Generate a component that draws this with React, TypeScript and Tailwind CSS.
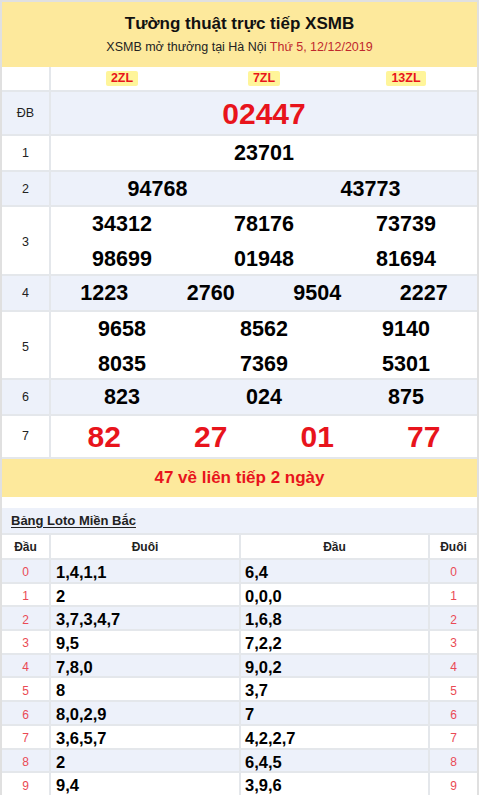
import React from "react";

const font = { fontFamily: '"Liberation Sans", Arial, sans-serif' };

interface PrizeRowProps {
  label: string;
  lines: string[][];
  cols: number;
  height: string;
  blue?: boolean;
  big?: boolean;
}

const gridCols: Record<number, string> = {
  1: "grid-cols-1",
  2: "grid-cols-2",
  3: "grid-cols-3",
  4: "grid-cols-4",
};

const PrizeRow = ({ label, lines, cols, height, blue, big }: PrizeRowProps) => {
  return (
    <div
      className={`grid grid-cols-[49px_1fr] border-t-2 border-[#e4e7eb] ${height} ${
        blue ? "bg-[#edf1fa]" : "bg-white"
      }`}
    >
      <div className="flex items-center justify-center border-r-2 border-[#e4e7eb] text-[12.5px] text-[#222]">
        {label}
      </div>
      <div className="flex flex-col justify-center">
        {lines.map((line, i) => (
          <div key={i} className={`grid ${gridCols[cols]} leading-[35px]`}>
            {line.map((n, j) => (
              <div
                key={j}
                className={`text-center font-bold ${
                  big ? "text-[30px] text-[#e8141c]" : "text-[21.5px] text-black"
                }`}
              >
                {n}
              </div>
            ))}
          </div>
        ))}
      </div>
    </div>
  );
};

const loto = [
  ["1,4,1,1", "6,4"],
  ["2", "0,0,0"],
  ["3,7,3,4,7", "1,6,8"],
  ["9,5", "7,2,2"],
  ["7,8,0", "9,0,2"],
  ["8", "3,7"],
  ["8,0,2,9", "7"],
  ["3,6,5,7", "4,2,2,7"],
  ["2", "6,4,5"],
  ["9,4", "3,9,6"],
];

export default function App() {
  return (
    <div className="w-[480px] h-[795px] overflow-hidden bg-white" style={font}>
      <div className="w-[479px] border-2 border-b-0 border-[#e0e0e0]">
        {/* Header */}
        <div className="h-[65px] bg-[#fde99c] flex flex-col items-center justify-center pt-[1px]">
          <div className="text-[17px] font-bold text-[#111] leading-[22px]">
            Tường thuật trực tiếp XSMB
          </div>
          <div className="text-[12.5px] text-[#222] leading-[20px] mt-[2px]">
            XSMB mở thưởng tại Hà Nội{" "}
            <span className="text-[#c0282d]">Thứ 5, 12/12/2019</span>
          </div>
        </div>

        {/* Badges row */}
        <div className="grid grid-cols-[49px_1fr] h-[23px] bg-white">
          <div className="border-r-2 border-[#e4e7eb]" />
          <div className="grid grid-cols-3 items-center">
            {["2ZL", "7ZL", "13ZL"].map((z) => (
              <div key={z} className="flex justify-center">
                <span className="bg-[#fff59a] text-[#e8141c] font-bold text-[12.5px] leading-[15px] px-[5px] rounded-[2px]">
                  {z}
                </span>
              </div>
            ))}
          </div>
        </div>

        <PrizeRow label="ĐB" lines={[["02447"]]} cols={1} height="h-[44px]" blue big />
        <PrizeRow label="1" lines={[["23701"]]} cols={1} height="h-[36px]" />
        <PrizeRow label="2" lines={[["94768", "43773"]]} cols={2} height="h-[35px]" blue />
        <PrizeRow
          label="3"
          lines={[
            ["34312", "78176", "73739"],
            ["98699", "01948", "81694"],
          ]}
          cols={3}
          height="h-[69px]"
        />
        <PrizeRow
          label="4"
          lines={[["1223", "2760", "9504", "2227"]]}
          cols={4}
          height="h-[36px]"
          blue
        />
        <PrizeRow
          label="5"
          lines={[
            ["9658", "8562", "9140"],
            ["8035", "7369", "5301"],
          ]}
          cols={3}
          height="h-[68px]"
        />
        <PrizeRow label="6" lines={[["823", "024", "875"]]} cols={3} height="h-[36px]" blue />
        <PrizeRow
          label="7"
          lines={[["82", "27", "01", "77"]]}
          cols={4}
          height="h-[43px]"
          big
        />

        {/* Yellow band */}
        <div className="h-[40px] bg-[#fde99c] flex items-center justify-center border-t-2 border-[#e4e7eb]">
          <span className="text-[17px] font-bold text-[#e8141c]">47 về liên tiếp 2 ngày</span>
        </div>

        <div className="h-[11px] bg-white" />

        {/* Loto table */}
        <div className="h-[25px] bg-[#edf1fa] flex items-center px-[9px]">
          <span className="text-[13px] font-bold text-[#222] underline underline-offset-2">
            Bảng Loto Miền Bắc
          </span>
        </div>
        <div className="grid grid-cols-[49px_190px_1fr_47px] h-[25px] bg-white border-t-2 border-[#e4e7eb] text-[12px] font-bold text-[#222]">
          <div className="flex items-center justify-center border-r-2 border-[#e4e7eb]">Đầu</div>
          <div className="flex items-center justify-center border-r-2 border-[#e4e7eb]">Đuôi</div>
          <div className="flex items-center justify-center border-r-2 border-[#e4e7eb]">Đầu</div>
          <div className="flex items-center justify-center">Đuôi</div>
        </div>
        {loto.map(([a, b], i) => (
          <div
            key={i}
            className={`grid grid-cols-[49px_190px_1fr_47px] h-[23.7px] border-t-2 border-[#e4e7eb] ${
              i % 2 === 0 ? "bg-[#edf1fa]" : "bg-white"
            }`}
          >
            <div className="flex items-center justify-center border-r-2 border-[#e4e7eb] text-[12px] text-[#ea4a55]">
              {i}
            </div>
            <div className="flex items-center pl-[5px] border-r-2 border-[#e4e7eb] text-[16.5px] font-bold text-black">
              {a}
            </div>
            <div className="flex items-center pl-[4px] border-r-2 border-[#e4e7eb] text-[16.5px] font-bold text-black">
              {b}
            </div>
            <div className="flex items-center justify-center text-[12px] text-[#ea4a55]">{i}</div>
          </div>
        ))}
      </div>
    </div>
  );
}
